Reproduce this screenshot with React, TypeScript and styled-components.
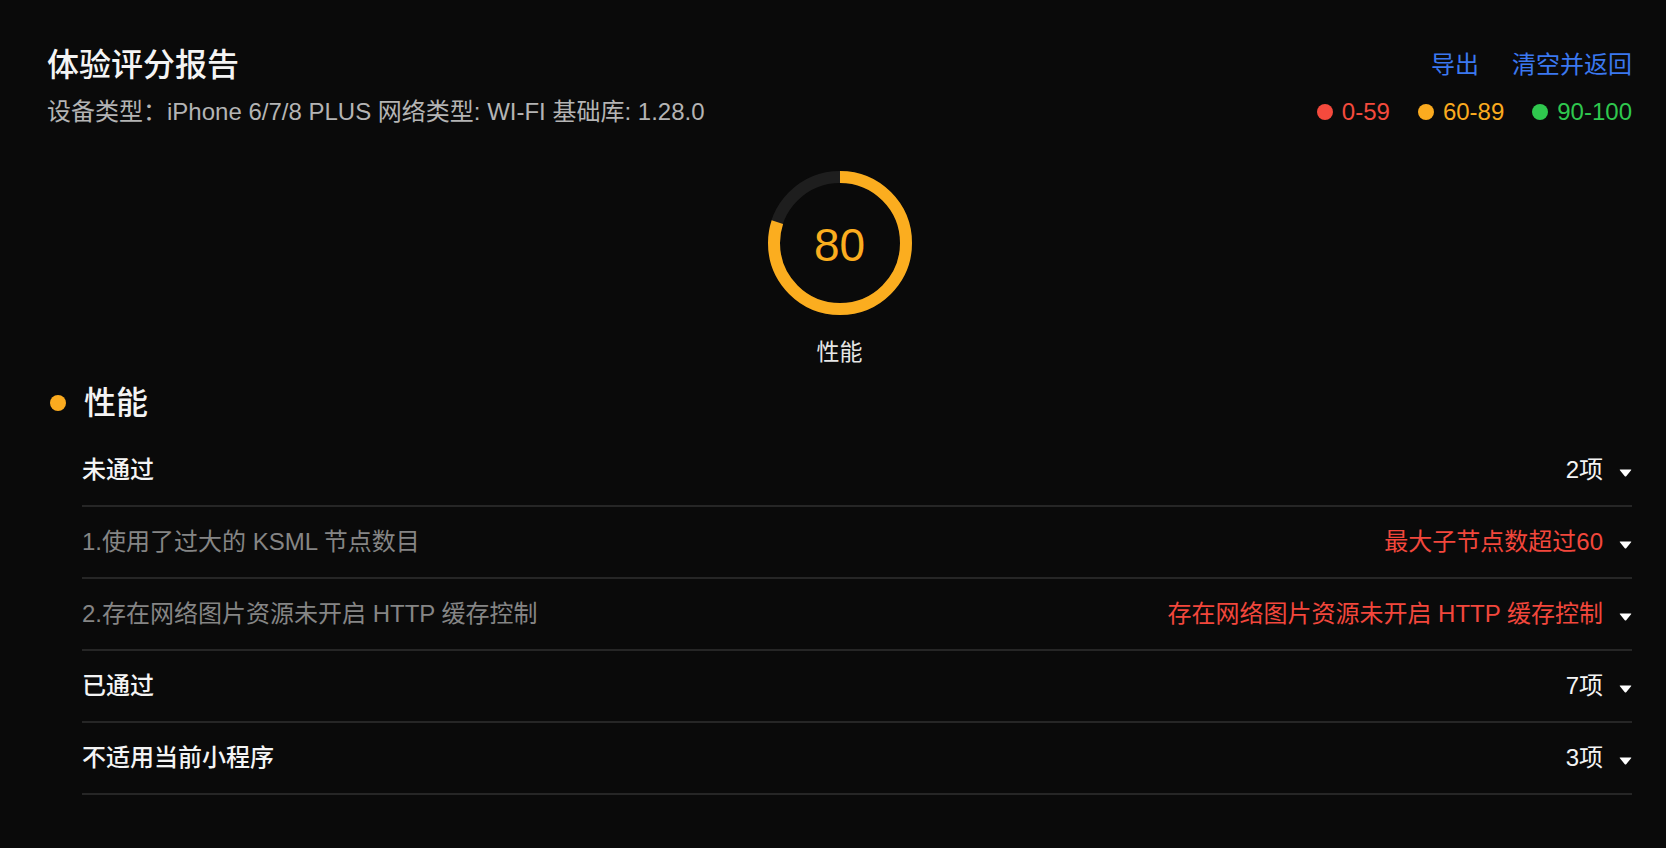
import React from "react";
import styled, { createGlobalStyle } from "styled-components";

const GlobalStyle = createGlobalStyle`
  html, body {
    margin: 0;
    padding: 0;
    background: #0a0a0a;
  }
  body {
    font-family: "Liberation Sans", "Noto Sans CJK SC", sans-serif;
    color: #f2f2f2;
  }
`;

const Page = styled.div`
  min-height: 848px;
  box-sizing: border-box;
  padding: 43px 34px 0 47px;
  background: #0a0a0a;
`;

const Header = styled.header`
  display: flex;
  justify-content: space-between;
  align-items: flex-start;
`;

const HeaderCol = styled.div<{ $align?: "start" | "end" }>`
  display: flex;
  flex-direction: column;
  align-items: ${(p) => (p.$align === "end" ? "flex-end" : "flex-start")};
`;

const Title = styled.h1`
  margin: 0;
  font-size: 32px;
  line-height: 44px;
  font-weight: 500;
  color: #f4f4f4;
`;

const Meta = styled.div`
  margin-top: 9px;
  font-size: 24px;
  line-height: 32px;
  color: #b4b4b4;
  white-space: pre;
`;

const Links = styled.div`
  display: flex;
  gap: 33px;
  height: 44px;
  align-items: center;
`;

const LinkButton = styled.a`
  font-size: 24px;
  line-height: 44px;
  color: #3b78f0;
  cursor: pointer;
  text-decoration: none;
`;

const Legend = styled.div`
  margin-top: 9px;
  display: flex;
  gap: 28px;
  height: 32px;
  align-items: center;
`;

const LegendItem = styled.span<{ $color: string }>`
  display: inline-flex;
  align-items: center;
  gap: 9px;
  font-size: 24px;
  line-height: 32px;
  color: ${(p) => p.$color};
`;

const Dot = styled.span<{ $color: string; $size?: number }>`
  display: inline-block;
  width: ${(p) => p.$size ?? 16}px;
  height: ${(p) => p.$size ?? 16}px;
  border-radius: 50%;
  background: ${(p) => p.$color};
  flex-shrink: 0;
`;

const GaugeSection = styled.section`
  margin-top: 43px;
  display: flex;
  flex-direction: column;
  align-items: center;
`;

const GaugeWrap = styled.div`
  position: relative;
  width: 144px;
  height: 144px;
`;

const GaugeValue = styled.div`
  position: absolute;
  inset: 0;
  display: flex;
  align-items: center;
  justify-content: center;
  font-size: 46px;
  color: #fbad1f;
  padding-top: 3px;
`;

const GaugeLabel = styled.div`
  margin-top: 22px;
  font-size: 23px;
  line-height: 30px;
  color: #e6e6e6;
`;

const SectionHeader = styled.div`
  margin-top: 16px;
  display: flex;
  align-items: center;
  gap: 18px;
  height: 40px;
  padding-left: 3px;
`;

const SectionTitle = styled.h2`
  margin: 0;
  font-size: 32px;
  line-height: 40px;
  font-weight: 500;
  color: #f4f4f4;
`;

const List = styled.div`
  margin: 12px 0 0 35px;
  display: flex;
  flex-direction: column;
`;

const Row = styled.div`
  display: flex;
  align-items: center;
  justify-content: space-between;
  height: 70px;
  border-bottom: 2px solid #262626;
`;

const RowLabel = styled.span<{ $variant: "group" | "item" }>`
  font-size: 24px;
  line-height: 32px;
  font-weight: ${(p) => (p.$variant === "group" ? 500 : 400)};
  color: ${(p) => (p.$variant === "group" ? "#f4f4f4" : "#858585")};
`;

const RowRight = styled.span`
  display: inline-flex;
  align-items: center;
  gap: 16px;
`;

const RowValue = styled.span<{ $warn?: boolean }>`
  font-size: 24px;
  line-height: 32px;
  color: ${(p) => (p.$warn ? "#f2473c" : "#f4f4f4")};
`;

const CaretSvg = styled.svg`
  width: 13px;
  height: 8px;
  margin-top: 6px;
  display: block;
`;

const Caret = () => (
  <CaretSvg viewBox="0 0 13 8">
    <path d="M1.2 0.5 H11.8 Q12.8 0.5 12.1 1.3 L7.2 7.2 Q6.5 8 5.8 7.2 L0.9 1.3 Q0.2 0.5 1.2 0.5 Z" fill="#ffffff" />
  </CaretSvg>
);

const Gauge = ({ value }: { value: number }) => {
  const r = 66;
  const c = 2 * Math.PI * r;
  const len = (c * value) / 100;
  return (
    <GaugeWrap>
      <svg width="144" height="144" viewBox="0 0 144 144">
        <circle cx="72" cy="72" r={r} fill="none" stroke="#1e1e1e" strokeWidth="12" />
        <circle
          cx="72"
          cy="72"
          r={r}
          fill="none"
          stroke="#fbad1f"
          strokeWidth="12"
          strokeDasharray={`${len} ${c}`}
          transform="rotate(-90 72 72)"
        />
      </svg>
      <GaugeValue>{value}</GaugeValue>
    </GaugeWrap>
  );
};

type RowData = {
  label: string;
  variant: "group" | "item";
  value: string;
  warn?: boolean;
};

const rows: RowData[] = [
  { label: "未通过", variant: "group", value: "2项" },
  { label: "1.使用了过大的 KSML 节点数目", variant: "item", value: "最大子节点数超过60", warn: true },
  { label: "2.存在网络图片资源未开启 HTTP 缓存控制", variant: "item", value: "存在网络图片资源未开启 HTTP 缓存控制", warn: true },
  { label: "已通过", variant: "group", value: "7项" },
  { label: "不适用当前小程序", variant: "group", value: "3项" },
];

export default function App() {
  return (
    <>
      <GlobalStyle />
      <Page>
        <Header>
          <HeaderCol>
            <Title>体验评分报告</Title>
            <Meta>设备类型：iPhone 6/7/8 PLUS 网络类型: WI-FI 基础库: 1.28.0</Meta>
          </HeaderCol>
          <HeaderCol $align="end">
            <Links>
              <LinkButton>导出</LinkButton>
              <LinkButton>清空并返回</LinkButton>
            </Links>
            <Legend>
              <LegendItem $color="#f54a3d">
                <Dot $color="#f54a3d" />
                0-59
              </LegendItem>
              <LegendItem $color="#fbab1f">
                <Dot $color="#fbab1f" />
                60-89
              </LegendItem>
              <LegendItem $color="#2fc84e">
                <Dot $color="#2fc84e" />
                90-100
              </LegendItem>
            </Legend>
          </HeaderCol>
        </Header>

        <GaugeSection>
          <Gauge value={80} />
          <GaugeLabel>性能</GaugeLabel>
        </GaugeSection>

        <SectionHeader>
          <Dot $color="#fbab1f" />
          <SectionTitle>性能</SectionTitle>
        </SectionHeader>

        <List>
          {rows.map((r, i) => (
            <Row key={i}>
              <RowLabel $variant={r.variant}>{r.label}</RowLabel>
              <RowRight>
                <RowValue $warn={r.warn}>{r.value}</RowValue>
                <Caret />
              </RowRight>
            </Row>
          ))}
        </List>
      </Page>
    </>
  );
}
